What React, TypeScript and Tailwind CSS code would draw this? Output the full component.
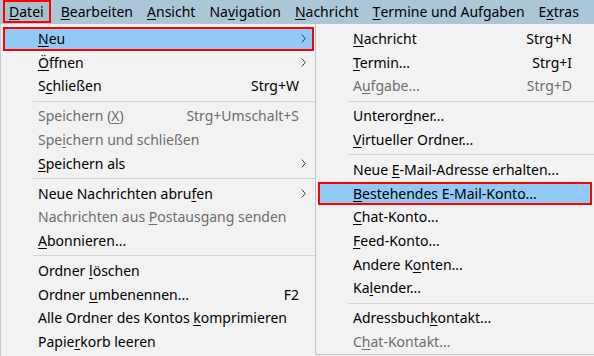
import React from "react";

type Item =
  | { sep: true }
  | {
      sep?: false;
      label: string;
      shortcut?: string;
      sub?: boolean;
      disabled?: boolean;
      active?: boolean;
    };

function Label({ text }: { text: string }) {
  const i = text.indexOf("&");
  if (i < 0) return <>{text}</>;
  return (
    <>
      {text.slice(0, i)}
      <span className="underline decoration-1 underline-offset-[2px]">{text[i + 1]}</span>
      {text.slice(i + 2)}
    </>
  );
}

function Chevron() {
  return (
    <svg width="5" height="9" viewBox="0 0 5 9" className="block">
      <path d="M0.8 0.6 L4.3 4.5 L0.8 8.4" fill="none" stroke="#3c3c3c" strokeWidth="1" />
    </svg>
  );
}

const leftItems: Item[] = [
  { label: "&Neu", sub: true, active: true },
  { label: "&Öffnen", sub: true },
  { label: "S&chließen", shortcut: "Strg+W" },
  { sep: true },
  { label: "Speichern (&X)", shortcut: "Strg+Umschalt+S", disabled: true },
  { label: "Spe&ichern und schließen", disabled: true },
  { label: "&Speichern als", sub: true },
  { sep: true },
  { label: "Neue Nachrichten abru&fen", sub: true },
  { label: "Nachrichten aus &Postausgang senden", disabled: true },
  { label: "&Abonnieren..." },
  { sep: true },
  { label: "Ordner &löschen" },
  { label: "Ordner &umbenennen...", shortcut: "F2" },
  { label: "Alle Ordner des Kontos &komprimieren" },
  { label: "Papie&rkorb leeren" },
];

const rightItems: Item[] = [
  { label: "&Nachricht", shortcut: "Strg+N" },
  { label: "&Termin...", shortcut: "Strg+I" },
  { label: "A&ufgabe...", shortcut: "Strg+D", disabled: true },
  { sep: true },
  { label: "Unteror&dner..." },
  { label: "&Virtueller Ordner..." },
  { sep: true },
  { label: "Neue &E-Mail-Adresse erhalten..." },
  { label: "&Bestehendes E-Mail-Konto...", active: true },
  { label: "&Chat-Konto..." },
  { label: "&Feed-Konto..." },
  { label: "Andere K&onten..." },
  { label: "Ka&lender..." },
  { sep: true },
  { label: "Adressbuch&kontakt..." },
  { label: "C&hat-Kontakt...", disabled: true },
];

function MenuRows({ items, right }: { items: Item[]; right?: boolean }) {
  return (
    <>
      {items.map((it, idx) =>
        it.sep ? (
          <div key={idx} className="flex h-[6.3px] items-center pl-[32px]">
            <div className="h-px w-full bg-[#d4d4d4]" />
          </div>
        ) : (
          <div
            key={idx}
            className={
              "ml-[2px] flex h-[23.7px] items-center border-2 pl-[33px] " +
              (right ? "mr-[2px] pr-[6px] " : "mr-px pr-[6px] ") +
              (it.active ? "border-[#ff0000] bg-[#91c9f7] " : "border-transparent ") +
              (it.disabled ? "text-[#6d6d6d]" : "text-black")
            }
          >
            <span className="flex-1 whitespace-nowrap">
              <Label text={it.label} />
            </span>
            {it.shortcut && <span className={"whitespace-nowrap " + (right ? "mr-[5px]" : "")}>{it.shortcut}</span>}
            <span className="flex w-[7px] justify-end">{it.sub && <Chevron />}</span>
          </div>
        )
      )}
    </>
  );
}

const bar = ["&Bearbeiten", "&Ansicht", "Na&vigation", "&Nachricht", "&Termine und Aufgaben", "E&xtras"];

export default function App() {
  return (
    <div className="flex h-[356px] w-[594px] flex-col overflow-hidden bg-[#f0f0f0] font-['Noto_Sans',sans-serif] text-[14px] leading-none text-black">
      <div className="flex h-[24px] shrink-0 items-start bg-[#abc7d7] pl-[3px]">
        <div className="flex h-[23px] items-center border-2 border-[#ff0000] bg-[#a7c0ce] pl-[4px] pr-[5px]">
          <Label text="&Datei" />
        </div>
        {bar.map((b, i) => (
          <div key={i} className={"flex h-[23px] items-center whitespace-nowrap " + (i === 0 ? "pl-[10px] pr-[7px]" : "px-[7px]")}>
            <Label text={b} />
          </div>
        ))}
      </div>
      <div className="flex min-h-0 flex-1 items-start">
        <div className="h-[340px] w-[315px] shrink-0 border-l border-[#cccccc] bg-[#f2f2f2] pt-[3px]">
          <MenuRows items={leftItems} />
        </div>
        <div className="min-w-0 flex-1 border-b border-l border-[#c4c4c4] bg-[#f2f2f2] pt-[3px]">
          <MenuRows items={rightItems} right />
        </div>
      </div>
    </div>
  );
}
